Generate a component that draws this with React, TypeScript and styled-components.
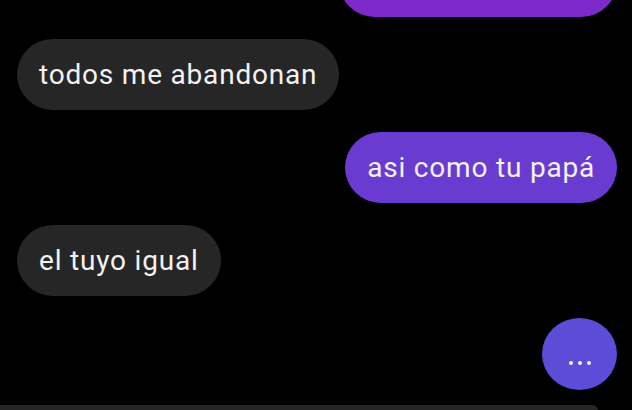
import React from "react";
import styled, { createGlobalStyle } from "styled-components";

const Global = createGlobalStyle`
  html, body { margin: 0; padding: 0; background: #000; }
  body { width: 632px; height: 410px; overflow: hidden; font-family: Roboto, "Noto Sans", sans-serif; }
`;

const Thread = styled.div`
  display: flex;
  flex-direction: column;
  gap: 22px;
  padding: 0 15px 0 17px;
  margin-top: -54px;
`;

const Row = styled.div<{ $mine?: boolean }>`
  display: flex;
  justify-content: ${(p) => (p.$mine ? "flex-end" : "flex-start")};
`;

const Bubble = styled.div<{ $bg: string; $width?: number }>`
  box-sizing: border-box;
  height: 71px;
  display: flex;
  align-items: center;
  padding: 0 22px 0 22px;
  border-radius: 36px;
  background: ${(p) => p.$bg};
  color: #f2f2f2;
  font-size: 28px;
  letter-spacing: 0.8px;
  white-space: nowrap;
  ${(p) => (p.$width ? `width: ${p.$width}px;` : "")}
`;

const Typing = styled.div`
  width: 75px;
  height: 72px;
  border-radius: 50%;
  background: #5b4dd8;
  display: flex;
  align-items: flex-end;
  justify-content: center;
  gap: 5px;
  padding-bottom: 25px;
  box-sizing: border-box;
`;

const Dot = styled.span`
  width: 4px;
  height: 4px;
  border-radius: 50%;
  background: #f4f2ff;
`;

const Composer = styled.div`
  margin-top: 15px;
  width: 598px;
  height: 6px;
  background: #262626;
  border-radius: 0 24px 0 0;
`;

export default function App() {
  return (
    <>
      <Global />
      <Thread>
        <Row $mine>
          <Bubble $bg="#7e29c9" $width={278} />
        </Row>
        <Row>
          <Bubble $bg="#262626">todos me abandonan</Bubble>
        </Row>
        <Row $mine>
          <Bubble $bg="#6a3bd1">asi como tu papá</Bubble>
        </Row>
        <Row>
          <Bubble $bg="#262626">el tuyo igual</Bubble>
        </Row>
        <Row $mine>
          <Typing>
            <Dot />
            <Dot />
            <Dot />
          </Typing>
        </Row>
      </Thread>
      <Composer />
    </>
  );
}
